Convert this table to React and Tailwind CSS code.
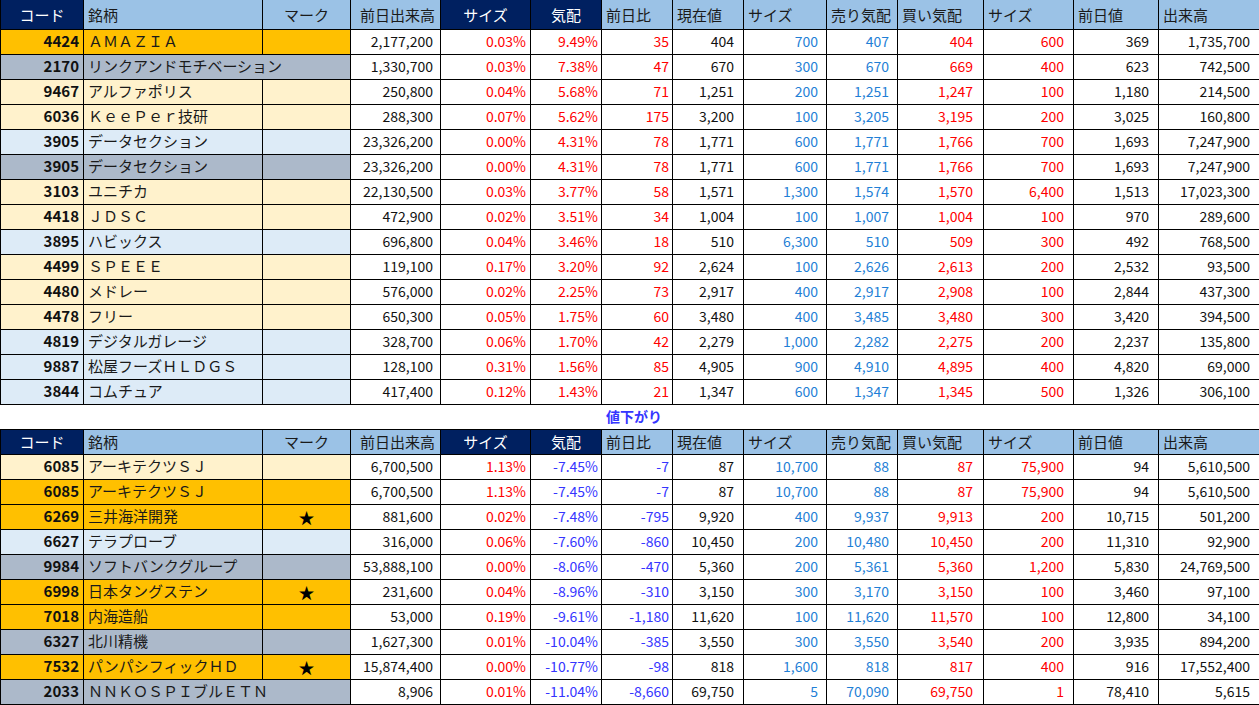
import React from "react";

const BG = {
  o: "bg-[#ffc000]",
  g: "bg-[#acb9ca]",
  y: "bg-[#fff2cc]",
  b: "bg-[#ddebf7]",
};

const PR = ["pr-[7px]", "pr-[4px]", "pr-[3px]", "pr-[3px]", "pr-[9px]", "pr-[8px]", "pr-[8px]", "pr-[10px]", "pr-[9px]", "pr-[9px]", "pr-[9px]"];

const RED = "text-[#ff0000]";
const BLUE = "text-[#1f7fd6]";
const NEG = "text-[#3535ff]";
const BLK = "text-[#111]";

function colorFor(i, v) {
  const neg = v.startsWith("-");
  switch (i) {
    case 1: return RED;
    case 2: return neg ? NEG : RED;
    case 3: return neg ? NEG : RED;
    case 5: return BLUE;
    case 6: return BLUE;
    case 7: return RED;
    case 8: return RED;
    default: return BLK;
  }
}

const UP = [
  ["4424", "ＡＭＡＺＩＡ", "o", "", false, ["2,177,200", "0.03%", "9.49%", "35", "404", "700", "407", "404", "600", "369", "1,735,700"]],
  ["2170", "リンクアンドモチベーション", "g", "", true, ["1,330,700", "0.03%", "7.38%", "47", "670", "300", "670", "669", "400", "623", "742,500"]],
  ["9467", "アルファポリス", "y", "", false, ["250,800", "0.04%", "5.68%", "71", "1,251", "200", "1,251", "1,247", "100", "1,180", "214,500"]],
  ["6036", "ＫｅｅＰｅｒ技研", "y", "", false, ["288,300", "0.07%", "5.62%", "175", "3,200", "100", "3,205", "3,195", "200", "3,025", "160,800"]],
  ["3905", "データセクション", "b", "", false, ["23,326,200", "0.00%", "4.31%", "78", "1,771", "600", "1,771", "1,766", "700", "1,693", "7,247,900"]],
  ["3905", "データセクション", "g", "", false, ["23,326,200", "0.00%", "4.31%", "78", "1,771", "600", "1,771", "1,766", "700", "1,693", "7,247,900"]],
  ["3103", "ユニチカ", "y", "", false, ["22,130,500", "0.03%", "3.77%", "58", "1,571", "1,300", "1,574", "1,570", "6,400", "1,513", "17,023,300"]],
  ["4418", "ＪＤＳＣ", "y", "", false, ["472,900", "0.02%", "3.51%", "34", "1,004", "100", "1,007", "1,004", "100", "970", "289,600"]],
  ["3895", "ハビックス", "b", "", false, ["696,800", "0.04%", "3.46%", "18", "510", "6,300", "510", "509", "300", "492", "768,500"]],
  ["4499", "ＳＰＥＥＥ", "y", "", false, ["119,100", "0.17%", "3.20%", "92", "2,624", "100", "2,626", "2,613", "200", "2,532", "93,500"]],
  ["4480", "メドレー", "y", "", false, ["576,000", "0.02%", "2.25%", "73", "2,917", "400", "2,917", "2,908", "100", "2,844", "437,300"]],
  ["4478", "フリー", "y", "", false, ["650,300", "0.05%", "1.75%", "60", "3,480", "400", "3,485", "3,480", "300", "3,420", "394,500"]],
  ["4819", "デジタルガレージ", "b", "", false, ["328,700", "0.06%", "1.70%", "42", "2,279", "1,000", "2,282", "2,275", "200", "2,237", "135,800"]],
  ["9887", "松屋フーズＨＬＤＧＳ", "b", "", false, ["128,100", "0.31%", "1.56%", "85", "4,905", "900", "4,910", "4,895", "400", "4,820", "69,000"]],
  ["3844", "コムチュア", "b", "", false, ["417,400", "0.12%", "1.43%", "21", "1,347", "600", "1,347", "1,345", "500", "1,326", "306,100"]],
];

const DOWN = [
  ["6085", "アーキテクツＳＪ", "y", "", false, ["6,700,500", "1.13%", "-7.45%", "-7", "87", "10,700", "88", "87", "75,900", "94", "5,610,500"]],
  ["6085", "アーキテクツＳＪ", "o", "", false, ["6,700,500", "1.13%", "-7.45%", "-7", "87", "10,700", "88", "87", "75,900", "94", "5,610,500"]],
  ["6269", "三井海洋開発", "o", "★", false, ["881,600", "0.02%", "-7.48%", "-795", "9,920", "400", "9,937", "9,913", "200", "10,715", "501,200"]],
  ["6627", "テラプローブ", "b", "", false, ["316,000", "0.06%", "-7.60%", "-860", "10,450", "200", "10,480", "10,450", "200", "11,310", "92,900"]],
  ["9984", "ソフトバンクグループ", "g", "", false, ["53,888,100", "0.00%", "-8.06%", "-470", "5,360", "200", "5,361", "5,360", "1,200", "5,830", "24,769,500"]],
  ["6998", "日本タングステン", "o", "★", false, ["231,600", "0.04%", "-8.96%", "-310", "3,150", "300", "3,170", "3,150", "100", "3,460", "97,100"]],
  ["7018", "内海造船", "o", "", false, ["53,000", "0.19%", "-9.61%", "-1,180", "11,620", "100", "11,620", "11,570", "100", "12,800", "34,100"]],
  ["6327", "北川精機", "g", "", false, ["1,627,300", "0.01%", "-10.04%", "-385", "3,550", "300", "3,550", "3,540", "200", "3,935", "894,200"]],
  ["7532", "パンパシフィックＨＤ", "o", "★", false, ["15,874,400", "0.00%", "-10.77%", "-98", "818", "1,600", "818", "817", "400", "916", "17,552,400"]],
  ["2033", "ＮＮＫＯＳＰＩブルＥＴＮ", "g", "", true, ["8,906", "0.01%", "-11.04%", "-8,660", "69,750", "5", "70,090", "69,750", "1", "78,410", "5,615"]],
];

const NAVY = "bg-[#002060] text-white";
const LB = "bg-[#9bc2e6] text-[#1a1a1a]";

function Header({ h, topBorder }) {
  const base = `border-x border-b border-black ${topBorder ? "border-t" : "border-t-0"} p-0 font-normal text-[15px] leading-none whitespace-nowrap overflow-hidden`;
  return (
    <tr className={h}>
      <th className={`${base} ${NAVY} text-center`}>コード</th>
      <th className={`${base} ${LB} text-left pl-[4px]`}>銘柄</th>
      <th className={`${base} ${LB} text-center`}>マーク</th>
      <th className={`${base} ${LB} text-right pr-[5px]`}>前日出来高</th>
      <th className={`${base} ${NAVY} text-center`}>サイズ</th>
      <th className={`${base} ${NAVY} text-center`}>気配</th>
      <th className={`${base} ${LB} text-left pl-[4px]`}>前日比</th>
      <th className={`${base} ${LB} text-left pl-[4px]`}>現在値</th>
      <th className={`${base} ${LB} text-left pl-[4px]`}>サイズ</th>
      <th className={`${base} ${LB} text-left pl-[4px]`}>売り気配</th>
      <th className={`${base} ${LB} text-left pl-[4px]`}>買い気配</th>
      <th className={`${base} ${LB} text-left pl-[4px]`}>サイズ</th>
      <th className={`${base} ${LB} text-left pl-[4px]`}>前日値</th>
      <th className={`${base} ${LB} text-left pl-[4px]`}>出来高</th>
    </tr>
  );
}

function Row({ r }) {
  const [code, name, bg, mark, merged, vals] = r;
  const cell = "border border-black p-0 whitespace-nowrap overflow-hidden";
  return (
    <tr className="h-[25px]">
      <td className={`${cell} ${BG[bg]} text-right pr-[4px] font-bold text-[15px] text-[#111]`}>{code}</td>
      {merged ? (
        <td colSpan={2} className={`${cell} ${BG[bg]} text-left pl-[4px] text-[15px] text-[#1a1a1a]`}>{name}</td>
      ) : (
        <>
          <td className={`${cell} ${BG[bg]} text-left pl-[4px] text-[15px] text-[#1a1a1a]`}>{name}</td>
          <td className={`${cell} ${BG[bg]} text-center text-[16px] text-black`}>{mark}</td>
        </>
      )}
      {vals.map((v, i) => (
        <td key={i} className={`${cell} bg-white text-right text-[14px] ${PR[i]} ${colorFor(i, v)}`}>{v}</td>
      ))}
    </tr>
  );
}

export default function App() {
  return (
    <div className="w-[1259px] h-[705px] bg-white overflow-hidden font-['Noto_Sans_CJK_JP','Noto_Sans',sans-serif]">
      <table className="table-fixed border-collapse w-[1259px]">
        <colgroup>
          <col className="w-[83px]" />
          <col className="w-[179px]" />
          <col className="w-[88px]" />
          <col className="w-[90px]" />
          <col className="w-[90px]" />
          <col className="w-[71px]" />
          <col className="w-[71px]" />
          <col className="w-[71px]" />
          <col className="w-[83px]" />
          <col className="w-[71px]" />
          <col className="w-[86px]" />
          <col className="w-[90px]" />
          <col className="w-[85px]" />
          <col className="w-[101px]" />
        </colgroup>
        <thead>
          <Header h="h-[29px]" topBorder={false} />
        </thead>
        <tbody>
          {UP.map((r, i) => <Row key={"u" + i} r={r} />)}
          <tr className="h-[25px]">
            <td colSpan={14} className="border-0 p-0 pl-[8px] text-center text-[14px] font-bold text-[#3535ff]">値下がり</td>
          </tr>
          <Header h="h-[25px]" topBorder={true} />
          {DOWN.map((r, i) => <Row key={"d" + i} r={r} />)}
        </tbody>
      </table>
    </div>
  );
}
